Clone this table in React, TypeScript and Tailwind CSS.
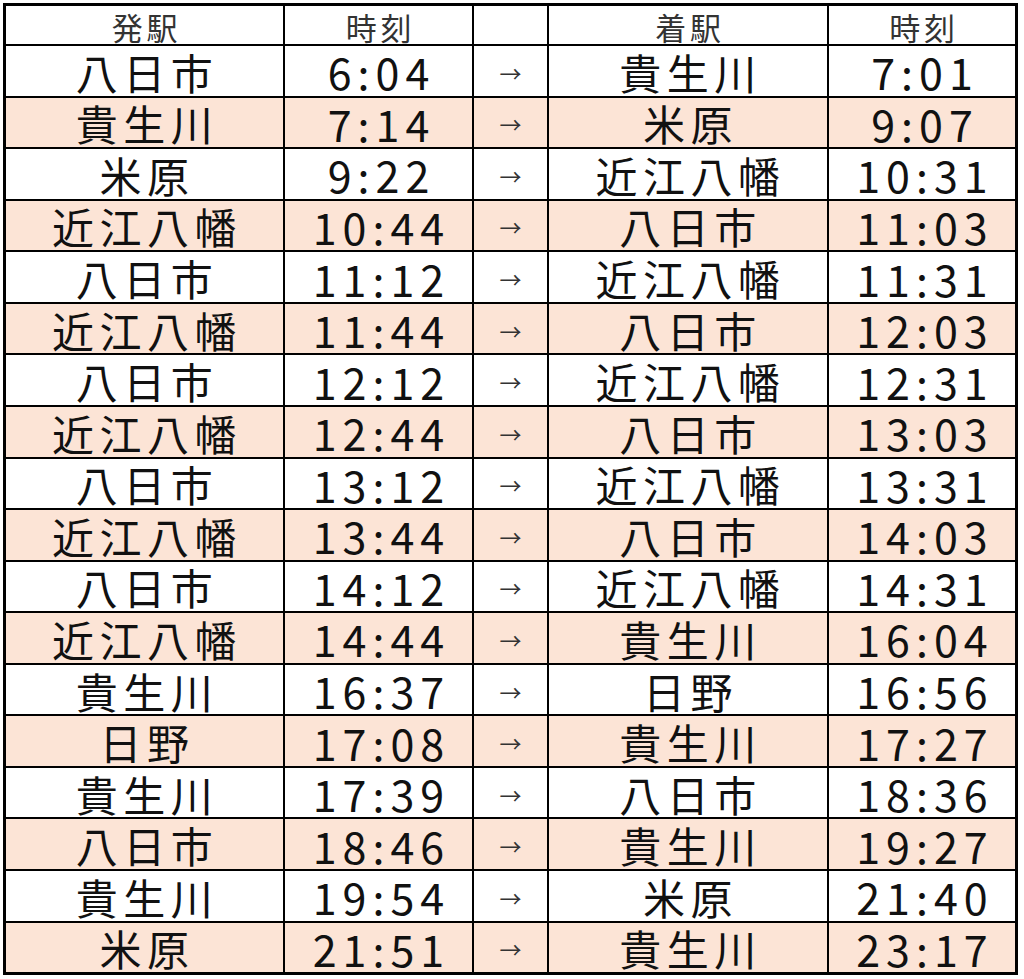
import React from "react";

const rows: [string, string, string, string][] = [
  ["八日市", "6:04", "貴生川", "7:01"],
  ["貴生川", "7:14", "米原", "9:07"],
  ["米原", "9:22", "近江八幡", "10:31"],
  ["近江八幡", "10:44", "八日市", "11:03"],
  ["八日市", "11:12", "近江八幡", "11:31"],
  ["近江八幡", "11:44", "八日市", "12:03"],
  ["八日市", "12:12", "近江八幡", "12:31"],
  ["近江八幡", "12:44", "八日市", "13:03"],
  ["八日市", "13:12", "近江八幡", "13:31"],
  ["近江八幡", "13:44", "八日市", "14:03"],
  ["八日市", "14:12", "近江八幡", "14:31"],
  ["近江八幡", "14:44", "貴生川", "16:04"],
  ["貴生川", "16:37", "日野", "16:56"],
  ["日野", "17:08", "貴生川", "17:27"],
  ["貴生川", "17:39", "八日市", "18:36"],
  ["八日市", "18:46", "貴生川", "19:27"],
  ["貴生川", "19:54", "米原", "21:40"],
  ["米原", "21:51", "貴生川", "23:17"],
];

const font = { fontFamily: '"Noto Sans CJK JP", "Noto Sans", sans-serif' };

export default function App() {
  return (
    <div className="w-[1024px] h-[979px] bg-white pl-[3px] pt-[3px]" style={font}>
      <div className="w-[1015px] h-[972px] border-[3px] border-black flex flex-col text-[#111]">
        <div className="h-[40px] shrink-0 border-b-2 border-black grid grid-cols-[279px_189px_75px_280px_186px] text-[31px] leading-none text-[#333]">
          <div className="border-r-2 border-black flex items-center justify-center tracking-[0.12em] pl-[4px] pt-[2px]">発駅</div>
          <div className="border-r-2 border-black flex items-center justify-center tracking-[0.12em] pl-[4px] pt-[2px]">時刻</div>
          <div className="border-r-2 border-black"></div>
          <div className="border-r-2 border-black flex items-center justify-center tracking-[0.12em] pl-[4px] pt-[2px]">着駅</div>
          <div className="flex items-center justify-center tracking-[0.12em] pl-[4px] pt-[2px]">時刻</div>
        </div>
        {rows.map((r, i) => (
          <div
            key={i}
            className={`flex-1 grid grid-cols-[279px_189px_75px_280px_186px] leading-none ${
              i < rows.length - 1 ? "border-b-2 border-black" : ""
            } ${i % 2 === 1 ? "bg-[#fce4d6]" : "bg-white"}`}
          >
            <div className="border-r-2 border-black flex items-center justify-center text-[42px] tracking-[0.13em] pl-[5px] pt-[2px]">{r[0]}</div>
            <div className="border-r-2 border-black flex items-center justify-center text-[43px] tracking-[0.14em] pl-[6px] pt-[2px]">{r[1]}</div>
            <div className="border-r-2 border-black flex items-center justify-center text-[22px] text-[#333] pt-[2px]">→</div>
            <div className="border-r-2 border-black flex items-center justify-center text-[42px] tracking-[0.13em] pl-[5px] pt-[2px]">{r[2]}</div>
            <div className="flex items-center justify-center text-[43px] tracking-[0.14em] pl-[6px] pt-[2px]">{r[3]}</div>
          </div>
        ))}
      </div>
    </div>
  );
}
